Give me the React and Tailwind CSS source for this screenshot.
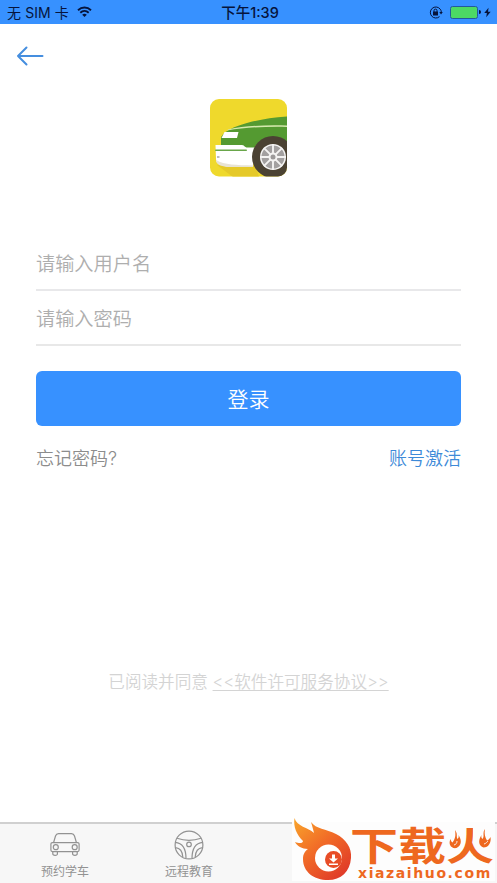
import { useState } from 'react'

function StatusBar() {
  return (
    <header className="grid h-6 grid-cols-3 items-center bg-[#3791ff] pr-1.5 pb-px pl-[7px] text-[14px] leading-[23px] text-[#06143c]">
      <div className="flex items-center gap-2 pt-px whitespace-nowrap">
        <span className="tracking-[.1px]">无 SIM 卡</span>
        <svg className="-mt-px h-[12px] w-[15px]" viewBox="0 0 15 12" fill="none">
          <path
            d="M1 4.2C4.8.6 10.2.6 14 4.2M3.3 6.7c2.5-2.3 5.9-2.3 8.4 0"
            stroke="currentColor"
            strokeWidth="1.9"
          />
          <path d="M5.2 8.7c1.4-1.2 3.2-1.2 4.6 0L7.5 11z" fill="currentColor" />
        </svg>
      </div>
      <div className="pt-px pl-0.5 text-center text-[14.500px] font-medium">
        下午1:39
      </div>
      <div className="flex items-center justify-end">
        <svg className="mr-[7px] h-[13px] w-[14px]" viewBox="0 0 14 13" fill="none">
          <path
            d="M11 2.9A5.5 5.5 0 1 0 10.5 10.6M11.2 3.1c.7.8 1.1 1.9 1.1 3"
            stroke="currentColor"
            strokeWidth="1"
          />
          <path d="M10.3 6h3.5L12 8.4z" fill="currentColor" />
          <rect x="4" y="5.6" width="5" height="4" rx=".4" fill="currentColor" />
          <path
            d="M5 6V4.6a1.5 1.5 0 0 1 3 0V6"
            stroke="currentColor"
            strokeWidth="1"
          />
        </svg>
        <div className="h-[13px] w-[28px] rounded-[2.5px] border border-[#23599c] bg-[#4cd964]" />
        <div className="ml-px h-1 w-[1.5px] rounded-r-full bg-[#06143c]" />
        <svg className="ml-[3px] h-[11px] w-[7px]" viewBox="0 0 8 11">
          <path d="M5.2 0 .3 6h3L2.5 11 7.6 4.6h-3z" fill="currentColor" />
        </svg>
      </div>
    </header>
  )
}

function AppLogo() {
  return (
    <svg className="h-[78px] w-[78px]" viewBox="0 0 78 78">
      <defs>
        <clipPath id="logo">
          <rect width="77" height="77.5" rx="9" />
        </clipPath>
      </defs>
      <g clipPath="url(#logo)">
        <rect width="78" height="78" fill="#efd92c" />
        <path d="M7 66 23 78H49L43 60z" fill="#e5c929" />
        <path
          d="M11 46V39C13 30 40 20 78 17.500V46H46L41 56H11z"
          fill="#549a31"
        />
        <path
          d="M18 30.500C35 26.500 54 26 78 26.500v1.400C55 27.400 36 28.400 17 31.500z"
          fill="#d5e9ad"
        />
        <path d="M14.500 33H28.500l-1.500 6H11.500z" fill="#fff" />
        <path
          d="M5.500 46h26c2 0 2 .8 5 2.500h9L43 67.500H17C9 66 6 64 6 60z"
          fill="#fff"
        />
        <path d="M6 61c9 5 20 5 37 5.500V68H17C10 67 6 65 6 61z" fill="#e8e3d4" />
        <rect x="5" y="50.500" width="32" height="1.600" rx=".8" fill="#69a64a" />
        <path d="M7 57h2.500v2H7z" fill="#bcbcbc" />
        <circle cx="63" cy="58" r="21" fill="#4b4233" />
        <circle cx="63" cy="58" r="13" fill="#f4f3f2" />
        <circle cx="63" cy="58" r="8" fill="none" stroke="#a3a0a0" strokeWidth="7" />
        <path
          d="M63 45v26M50 58h26M53.800 48.800l18.400 18.400M53.800 67.200l18.400-18.400"
          stroke="#f4f3f2"
          strokeWidth="1.900"
        />
        <circle cx="63" cy="58" r="4" fill="#f4f3f2" />
        <circle cx="63" cy="58" r="2.500" fill="#9c9999" />
      </g>
    </svg>
  )
}

function CarIcon() {
  return (
    <svg
      className="h-[30px] w-[32px]"
      viewBox="0 0 32 30"
      fill="none"
      stroke="#929292"
      strokeWidth="1.2"
    >
      <path d="M4.600 12.500 6.500 6C7 4.500 8 3.600 9.500 3.600h13c1.500 0 2.500.9 3 2.400l1.900 6.500" />
      <rect x="1.900" y="12.600" width="28.200" height="9" rx="1.500" />
      <circle cx="6.800" cy="17.200" r="2.500" />
      <circle cx="25.700" cy="17.200" r="2.500" />
      <path d="M3.800 21.600v2.200c0 1.200.6 1.500 2.300 1.500s2.300-.3 2.300-1.500v-2.200M23.600 21.600v2.200c0 1.200.6 1.500 2.300 1.500s2.300-.3 2.300-1.500v-2.200" />
    </svg>
  )
}

function WheelIcon() {
  return (
    <svg
      className="h-[30px] w-[30px]"
      viewBox="0 0 30 30"
      fill="none"
      stroke="#929292"
      strokeWidth="1.2"
    >
      <circle cx="15" cy="15" r="13.900" />
      <path d="M3 8.300c7.500 2.500 16.500 2.500 24 0M1.200 12.300C7.500 12.800 12 18 12 28.500M28.800 12.300C22.500 12.800 18 18 18 28.500M1.500 17.700c4.500.5 7 4 7.300 9.300M28.500 17.700c-4.500.5-7 4-7.300 9.300" />
      <circle cx="15" cy="14.400" r="2.300" />
    </svg>
  )
}

const tabs = [
  { label: '预约学车', Icon: CarIcon },
  { label: '远程教育', Icon: WheelIcon },
]

function SiteBadge() {
  return (
    <div className="absolute -top-0.5 right-[2px] flex h-[59px] w-[203px] bg-[#fdfdfd] text-[#ee681f]">
      <svg className="-mt-1.5 h-[66px] w-[60px] shrink-0" viewBox="0 0 60 66">
        <defs>
          <linearGradient id="flame" x1="0" y1="0" x2=".8" y2="1">
            <stop offset="0" stopColor="#f9a52b" />
            <stop offset=".5" stopColor="#f16a27" />
            <stop offset="1" stopColor="#df3929" />
          </linearGradient>
        </defs>
        <path
          d="M2.500 2C5 11 16 11 22 17C21 13 20 9 19 6C24 13 34 13 44 18C54 23 60 32 59 42C58 56 49 64 36 64C22 64 11 56 11 43C11 38 13 35 16 33C10 33 5 30 3 26C8 28 11 27 11 25C5 19 1 11 2.500 2z"
          fill="url(#flame)"
        />
        <circle cx="36.500" cy="42" r="13.500" fill="#fff" />
        <circle cx="41.500" cy="43.500" r="8.500" fill="#e84d28" />
        <path d="M40 38.500h3v4h3l-4.500 4-4.500-4h3zM37 47.500h9v1.500h-9z" fill="#fff" />
      </svg>
      <div className="relative flex w-[140px] flex-col whitespace-nowrap">
        <div className="-ml-0.5 h-[44px] origin-top-left translate-y-[5px] scale-y-[.8] text-[48px] leading-[47px] font-bold">
          下载火
        </div>
        <div className="ml-[6px] font-['DejaVu_Sans'] text-[14px] leading-[14px] font-bold tracking-[1.6px]">
          xiazaihuo.com
        </div>
        {/* flames in place of the two side strokes of 火 */}
        <svg
          className="absolute top-[6px] left-[94px] h-[24px] w-[48px]"
          viewBox="0 0 48 24"
        >
          <path d="M0 0H18V12L13 23H0zM27 0H48V23H33L27 14z" fill="#fdfdfd" />
          <path
            d="M9 2c3 4 1 6 2.500 9 1-1 1.500-2 1-4 4 6 2.500 11-2 13C5 21 2 16 4.500 11c.5 2 1 3 2 3.500C9 11 10 8 9 2zM39 1c-3 4 0 7-2.500 10-1-1-1.500-2-1-4-4 6-2.500 11 2 12.500 5 0 8-5 7-10.500-1 2-2 3-3.500 3.500C39 9 38 6 39 1z"
            fill="currentColor"
          />
          <path
            d="M8 17c2-.5 3-2 3-4M38 16c2-.5 3-2 4-3"
            fill="none"
            stroke="#fdfdfd"
            strokeWidth=".9"
          />
        </svg>
      </div>
    </div>
  )
}

export default function App() {
  const [username, setUsername] = useState('')
  const [password, setPassword] = useState('')

  return (
    <div className="flex h-[883px] w-[497px] flex-col overflow-hidden bg-white font-['Inter','Noto_Sans_CJK_SC',sans-serif]">
      <StatusBar />

      <main className="flex flex-1 flex-col px-9">
        <button type="button" className="mt-[21px] -ml-5 w-7">
          <svg
            className="h-[22px] w-7"
            viewBox="0 0 28 22"
            fill="none"
            stroke="#458edf"
            strokeWidth="2"
            strokeLinecap="round"
            strokeLinejoin="round"
          >
            <path d="M10.500 2.500 2 11l8.500 8.500M2 11h24.500" />
          </svg>
        </button>

        <div className="mt-8 flex justify-center">
          <AppLogo />
        </div>

        <form className="mt-[59px] flex flex-col">
          <input
            value={username}
            onChange={(e) => setUsername(e.target.value)}
            placeholder="请输入用户名"
            className="h-[55px] border-b-2 border-[#e8e8ea] pt-0.5 text-[19.200px] font-[350] outline-none placeholder:text-[#aeaeae]"
          />
          <input
            type="password"
            value={password}
            onChange={(e) => setPassword(e.target.value)}
            placeholder="请输入密码"
            className="h-[55px] border-b-2 border-[#e8e8e8] pt-0.5 text-[19.200px] font-[350] outline-none placeholder:text-[#aeaeae]"
          />
          <button
            type="button"
            className="mt-[25px] h-[55px] rounded-md bg-[#3791ff] pt-0.5 text-[21px] font-[350] text-white"
          >
            登录
          </button>
        </form>

        <div className="mt-[19px] flex justify-between text-[18px] leading-7 font-[350]">
          <span className="text-[#8c8c8c]">忘记密码?</span>
          <span className="text-[#3d8ad8]">账号激活</span>
        </div>

        <p className="mt-auto mb-[126px] text-center text-[16.600px] leading-7 font-[350] text-[#d4d4d4]">
          已阅读并同意{' '}
          <span className="underline underline-offset-2">
            &lt;&lt;软件许可服务协议&gt;&gt;
          </span>
        </p>
      </main>

      <footer className="relative flex h-[61px] border-t-2 border-[#d0d0d0] bg-[#f7f7f7] pl-[3px]">
        {tabs.map(({ label, Icon }) => (
          <div key={label} className="flex w-[124px] flex-col items-center pt-1.5">
            <Icon />
            <span className="mt-0.5 text-[12px] leading-5 text-[#929292]">
              {label}
            </span>
          </div>
        ))}
        <SiteBadge />
      </footer>
    </div>
  )
}
